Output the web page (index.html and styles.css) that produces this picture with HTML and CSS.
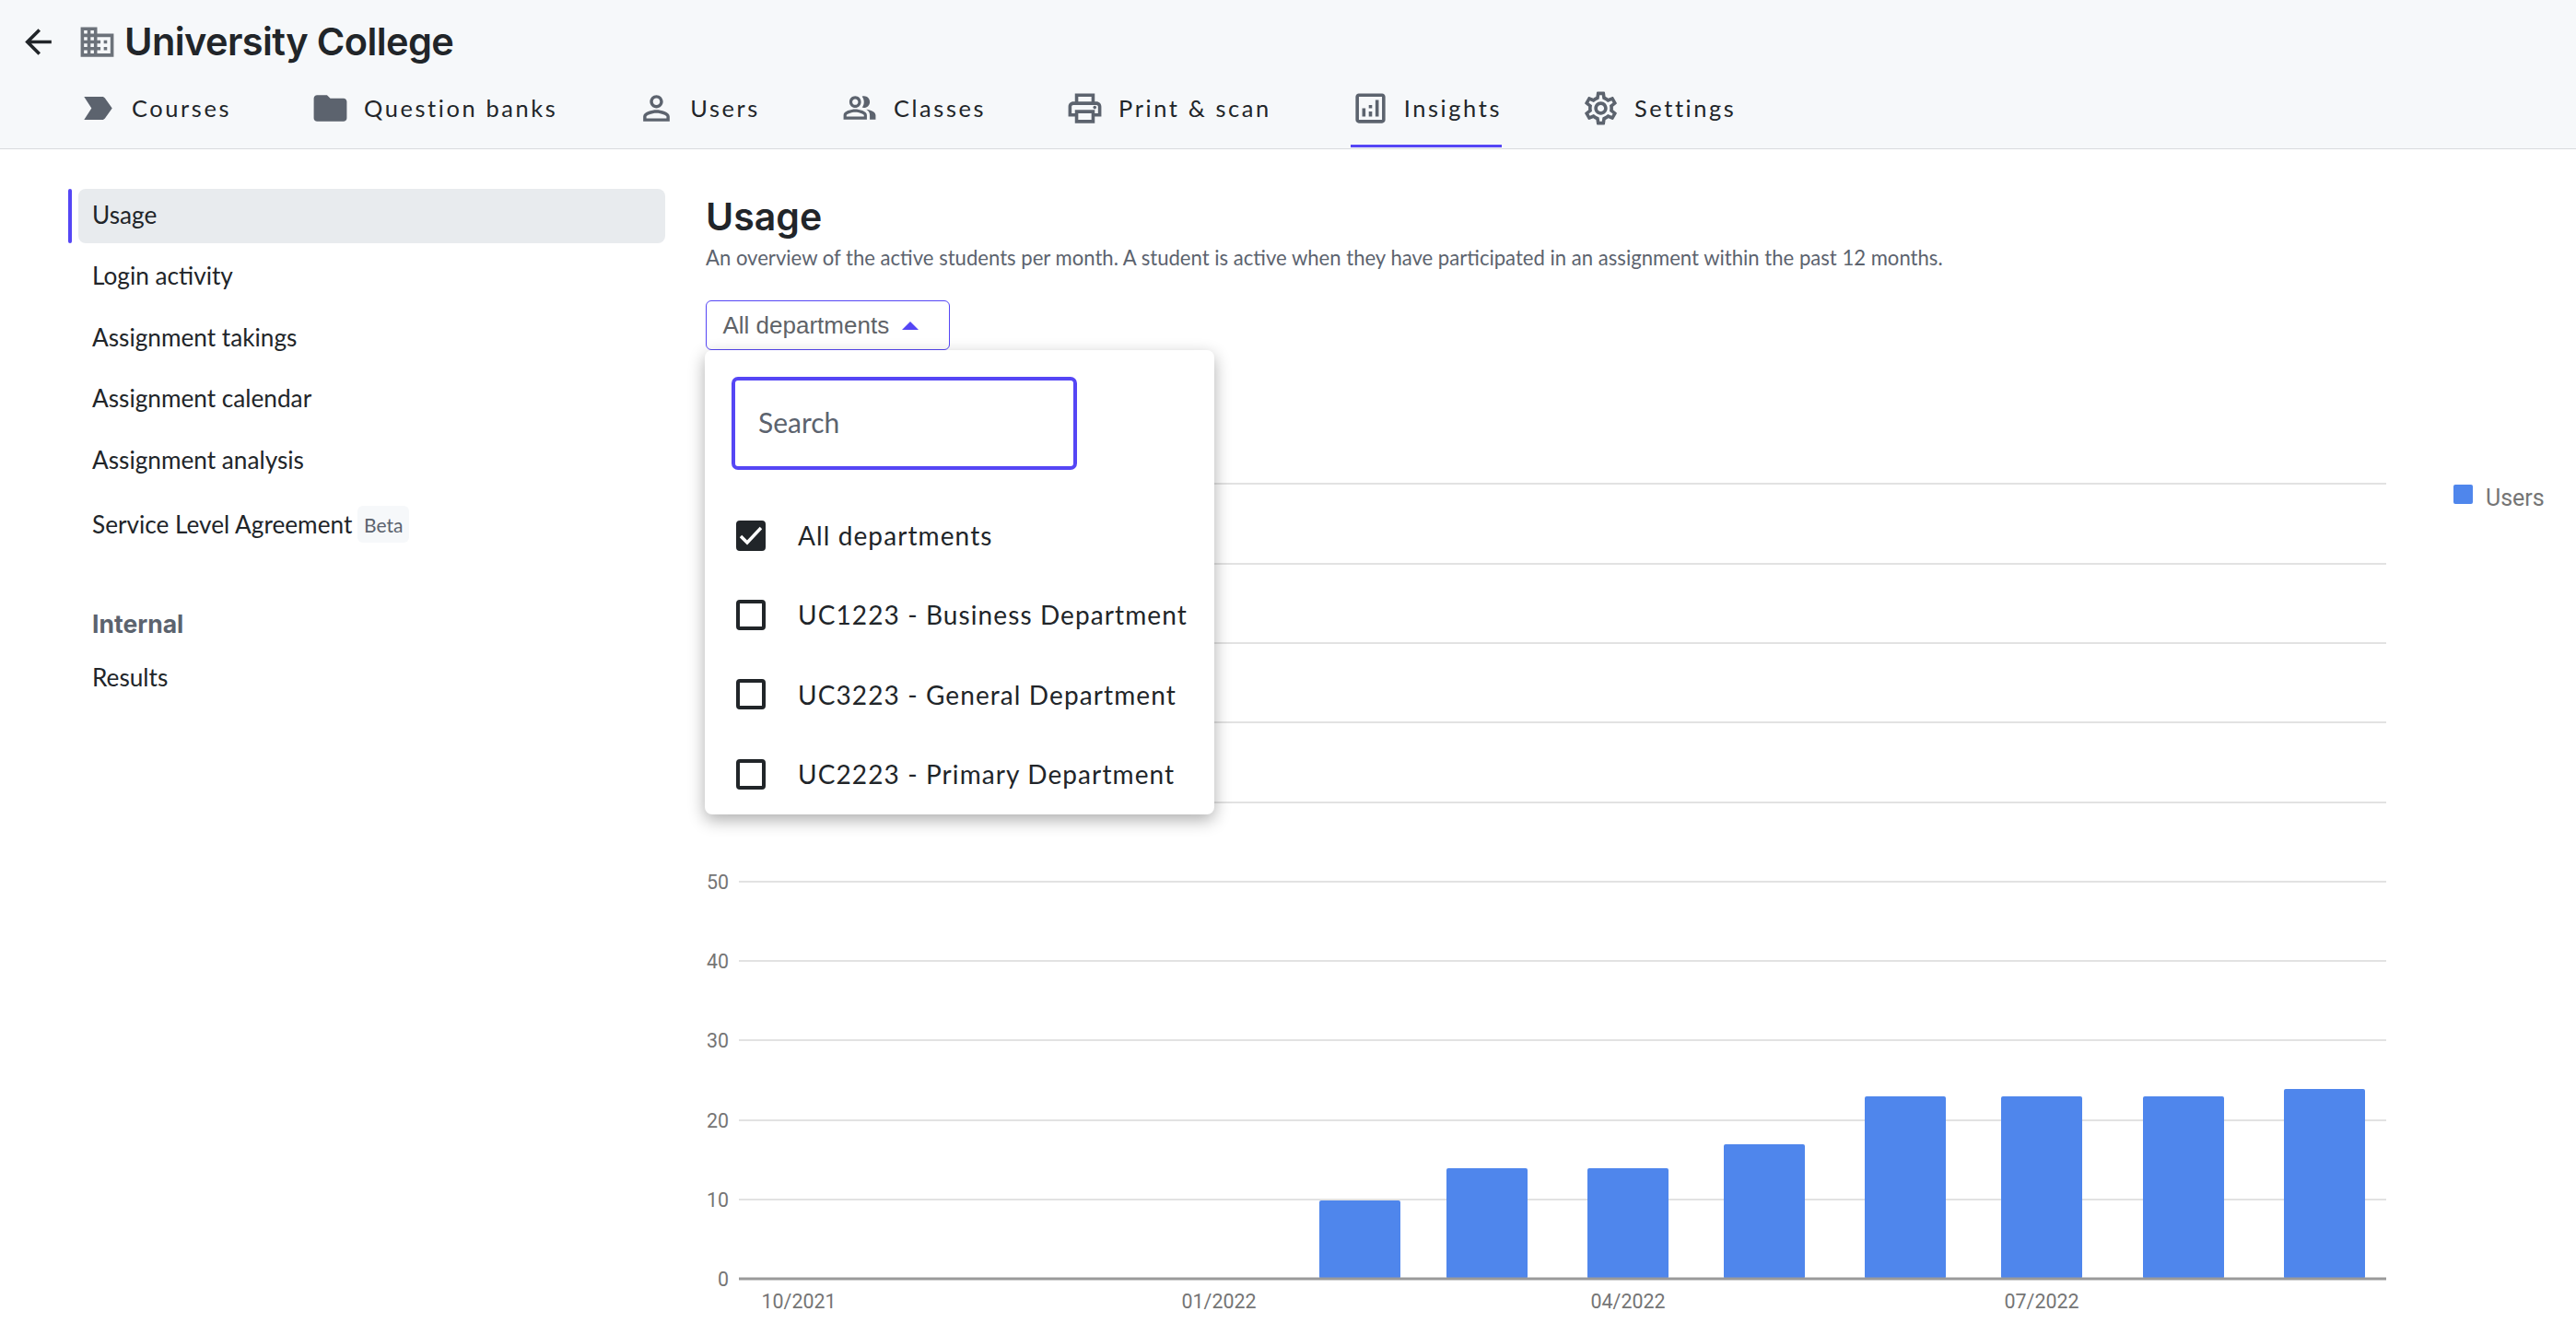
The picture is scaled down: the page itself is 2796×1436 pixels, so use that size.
FILE: index.html
```html
<!DOCTYPE html>
<html>
  <head>
    <meta charset="utf-8">
    <title>University College - Insights</title>
    <link rel="stylesheet" href="styles.css">
  </head>
  <body>
    <header class="top-bar">
      <div class="title-row">
        <svg class="icon icon-back" viewBox="0 0 24 24"><path d="M20 11H7.83l5.59-5.59L12 4l-8 8 8 8 1.41-1.41L7.83 13H20v-2z"/></svg>
        <svg class="icon icon-building" viewBox="0 0 24 24"><path d="M12 7V3H2v18h20V7H12zM6 19H4v-2h2v2zm0-4H4v-2h2v2zm0-4H4V9h2v2zm0-4H4V5h2v2zm4 12H8v-2h2v2zm0-4H8v-2h2v2zm0-4H8V9h2v2zm0-4H8V5h2v2zm10 12h-8v-2h2v-2h-2v-2h2v-2h-2V9h8v10zm-2-8h-2v2h2v-2zm0 4h-2v2h2v-2z"/></svg>
        <h1 class="org-name">University College</h1>
      </div>
      <nav class="tabs">
        <a class="tab">
          <svg class="icon" viewBox="0 0 24 24"><path d="M3.5 18.99l11 .01c.67 0 1.27-.33 1.63-.84L20.5 12l-4.37-6.16c-.36-.51-.96-.84-1.63-.84l-11 .01L8 12l-4.5 6.99z"/></svg>
          <span>Courses</span>
        </a>
        <a class="tab">
          <svg class="icon" viewBox="0 0 24 24"><path d="M10 4H4c-1.1 0-1.99.9-1.99 2L2 18c0 1.1.9 2 2 2h16c1.1 0 2-.9 2-2V8c0-1.1-.9-2-2-2h-8l-2-2z"/></svg>
          <span>Question banks</span>
        </a>
        <a class="tab">
          <svg class="icon" viewBox="0 0 24 24"><path d="M12 5.9c1.16 0 2.1.94 2.1 2.1s-.94 2.1-2.1 2.1S9.9 9.16 9.9 8s.94-2.1 2.1-2.1m0 9c2.97 0 6.1 1.46 6.1 2.1v1.1H5.9V17c0-.64 3.13-2.1 6.1-2.1M12 4C9.79 4 8 5.79 8 8s1.79 4 4 4 4-1.79 4-4-1.79-4-4-4zm0 9c-2.67 0-8 1.34-8 4v3h16v-3c0-2.66-5.33-4-8-4z"/></svg>
          <span>Users</span>
        </a>
        <a class="tab">
          <svg class="icon icon-classes" viewBox="0 0 24 24"><path d="M16.67 13.13C18.04 14.06 19 15.32 19 17v3h4v-3c0-2.18-3.57-3.47-6.33-3.87zM15 12c2.21 0 4-1.79 4-4s-1.79-4-4-4c-.47 0-.91.1-1.33.24C14.5 5.27 15 6.58 15 8s-.5 2.73-1.33 3.76c.42.14.86.24 1.33.24zM9 12c2.21 0 4-1.79 4-4s-1.79-4-4-4-4 1.79-4 4 1.79 4 4 4zm0-6c1.1 0 2 .9 2 2s-.9 2-2 2-2-.9-2-2 .9-2 2-2zM9 13c-2.67 0-8 1.34-8 4v3h16v-3c0-2.66-5.33-4-8-4zm6 5H3v-.99C3.2 16.29 6.3 15 9 15s5.8 1.29 6 2v1z"/></svg>
          <span>Classes</span>
        </a>
        <a class="tab">
          <svg class="icon" viewBox="0 0 24 24"><path d="M19 8h-1V3H6v5H5c-1.66 0-3 1.34-3 3v6h4v4h12v-4h4v-6c0-1.66-1.34-3-3-3zM8 5h8v3H8V5zm8 12v2H8v-4h8v2zm2-2v-2H6v2H4v-4c0-.55.45-1 1-1h14c.55 0 1 .45 1 1v4h-2z"/><circle cx="18" cy="11.5" r="1"/></svg>
          <span>Print &amp; scan</span>
        </a>
        <a class="tab active">
          <svg class="icon" viewBox="0 0 24 24"><path d="M19 3H5c-1.1 0-2 .9-2 2v14c0 1.1.9 2 2 2h14c1.1 0 2-.9 2-2V5c0-1.1-.9-2-2-2zm0 16H5V5h14v14zM7 12h2v5H7zm8-5h2v10h-2zm-4 7h2v3h-2zm0-4h2v2h-2z"/></svg>
          <span>Insights</span>
        </a>
        <a class="tab">
          <svg class="icon" viewBox="0 0 24 24"><path d="M19.43 12.98c.04-.32.07-.64.07-.98 0-.34-.03-.66-.07-.98l2.11-1.65c.19-.15.24-.42.12-.64l-2-3.46c-.09-.16-.26-.25-.44-.25-.06 0-.12.01-.17.03l-2.49 1c-.52-.4-1.08-.73-1.69-.98l-.38-2.65C14.46 2.18 14.25 2 14 2h-4c-.25 0-.46.18-.49.42l-.38 2.65c-.61.25-1.17.59-1.69.98l-2.49-1c-.06-.02-.12-.03-.18-.03-.17 0-.34.09-.43.25l-2 3.46c-.13.22-.07.49.12.64l2.11 1.65c-.04.32-.07.65-.07.98 0 .33.03.66.07.98l-2.11 1.65c-.19.15-.24.42-.12.64l2 3.46c.09.16.26.25.44.25.06 0 .12-.01.17-.03l2.49-1c.52.4 1.08.73 1.69.98l.38 2.65c.03.24.24.42.49.42h4c.25 0 .46-.18.49-.42l.38-2.65c.61-.25 1.17-.59 1.69-.98l2.49 1c.06.02.12.03.18.03.17 0 .34-.09.43-.25l2-3.46c.12-.22.07-.49-.12-.64l-2.11-1.65zm-1.98-1.71c.04.31.05.52.05.73 0 .21-.02.43-.05.73l-.14 1.13.89.7 1.08.84-.7 1.21-1.27-.51-1.04-.42-.9.68c-.43.32-.84.56-1.25.73l-1.06.43-.16 1.13-.2 1.35h-1.4l-.19-1.35-.16-1.13-1.06-.43c-.43-.18-.83-.41-1.23-.71l-.91-.7-1.06.43-1.27.51-.7-1.21 1.08-.84.89-.7-.14-1.13c-.03-.31-.05-.54-.05-.74s.02-.43.05-.73l.14-1.13-.89-.7-1.08-.84.7-1.21 1.27.51 1.04.42.9-.68c.43-.32.84-.56 1.25-.73l1.06-.43.16-1.13.2-1.35h1.39l.19 1.35.16 1.13 1.06.43c.43.18.83.41 1.23.71l.91.7 1.06-.43 1.27-.51.7 1.21-1.07.85-.89.7.14 1.13zM12 8c-2.21 0-4 1.79-4 4s1.79 4 4 4 4-1.79 4-4-1.79-4-4-4zm0 6c-1.1 0-2-.9-2-2s.9-2 2-2 2 .9 2 2-.9 2-2 2z"/></svg>
          <span>Settings</span>
        </a>
      </nav>
    </header>

    <div class="page">
      <aside class="sidebar">
        <a class="side-item active">Usage</a>
        <a class="side-item">Login activity</a>
        <a class="side-item">Assignment takings</a>
        <a class="side-item">Assignment calendar</a>
        <a class="side-item">Assignment analysis</a>
        <a class="side-item side-item-beta">Service Level Agreement <span class="badge">Beta</span></a>
        <div class="side-heading">Internal</div>
        <a class="side-item">Results</a>
      </aside>

      <main class="content">
        <h2 class="page-title">Usage</h2>
        <p class="page-intro">An overview of the active students per month. A student is active when they have participated in an assignment within the past 12 months.</p>

        <div class="dropdown">
          <button type="button" class="dropdown-toggle">All departments <span class="caret"></span></button>
          <div class="dropdown-menu">
            <input type="text" class="search-input" placeholder="Search">
            <label class="option">
              <span class="check checked"><svg viewBox="0 0 24 25"><path d="M1 13l7 7L23 4" /></svg></span>
              All departments
            </label>
            <label class="option"><span class="check"></span>UC1223 - Business Department</label>
            <label class="option"><span class="check"></span>UC3223 - General Department</label>
            <label class="option"><span class="check"></span>UC2223 - Primary Department</label>
          </div>
        </div>

        <svg class="chart" width="2030" height="936" viewBox="0 0 2030 936">
          <g class="grid">
            <line x1="36" x2="1824" y1="25" y2="25"/>
            <line x1="36" x2="1824" y1="112" y2="112"/>
            <line x1="36" x2="1824" y1="198" y2="198"/>
            <line x1="36" x2="1824" y1="284" y2="284"/>
            <line x1="36" x2="1824" y1="371" y2="371"/>
            <line x1="36" x2="1824" y1="457" y2="457"/>
            <line x1="36" x2="1824" y1="543" y2="543"/>
            <line x1="36" x2="1824" y1="629" y2="629"/>
            <line x1="36" x2="1824" y1="716" y2="716"/>
            <line x1="36" x2="1824" y1="802" y2="802"/>
          </g>
          <g class="bars">
            <rect x="666" y="803" width="88" height="85" rx="2"/>
            <rect x="804" y="768" width="88" height="120" rx="2"/>
            <rect x="957" y="768" width="88" height="120" rx="2"/>
            <rect x="1105" y="742" width="88" height="146" rx="2"/>
            <rect x="1258" y="690" width="88" height="198" rx="2"/>
            <rect x="1406" y="690" width="88" height="198" rx="2"/>
            <rect x="1560" y="690" width="88" height="198" rx="2"/>
            <rect x="1713" y="682" width="88" height="206" rx="2"/>
          </g>
          <line class="axis" x1="36" x2="1824" y1="888" y2="888"/>
          <g class="y-labels">
            <text x="25" y="465">50</text>
            <text x="25" y="551">40</text>
            <text x="25" y="637">30</text>
            <text x="25" y="724">20</text>
            <text x="25" y="810">10</text>
            <text x="25" y="896">0</text>
          </g>
          <g class="x-labels">
            <text x="101" y="920">10/2021</text>
            <text x="557" y="920">01/2022</text>
            <text x="1001" y="920">04/2022</text>
            <text x="1450" y="920">07/2022</text>
          </g>
          <rect class="legend-key" x="1897" y="26" width="21" height="21" rx="2"/>
          <text class="legend-label" x="1932" y="49">Users</text>
        </svg>
      </main>
    </div>
  </body>
</html>
```

FILE: styles.css
```css
:root {
  --color-text: #212529;
  --color-muted: #5c636e;
  --color-icon: #5c636e;
  --color-accent: #5546f5;
  --color-header: #f6f8fa;
  --color-border: #d8dade;
  --color-bar: #4f86ec;
  --color-chart-text: #757575;
  --font-body: "Lato", "Noto Sans", sans-serif;
  --font-head: "Inter", "Noto Sans", sans-serif;
}

html, body {
  height: 100%;
}

body {
  margin: 0;
  overflow: hidden;
  background: white;
  color: var(--color-text);
  font-family: var(--font-body);
}

.icon {
  width: 43px;
  height: 43px;
  flex: none;
  fill: var(--color-icon);
}

.top-bar {
  height: 161px;
  background: var(--color-header);
  border-bottom: 1px solid var(--color-border);
}

.title-row {
  display: flex;
  align-items: center;
  height: 90px;
  padding-left: 20px;
}

.icon-back {
  fill: var(--color-text);
}

.icon-building {
  margin-left: 21px;
  fill: #6c727a;
}

.org-name {
  margin: 0 0 0 8px;
  font-family: var(--font-head);
  font-size: 41.5px;
  font-weight: 600;
  letter-spacing: -0.6px;
}

.tabs {
  display: flex;
  gap: 86px;
  padding-left: 85px;
}

.tab {
  display: flex;
  align-items: center;
  gap: 15px;
  height: 54px;
  padding-bottom: 13px;
  border-bottom: 3px solid transparent;
  font-size: 25.4px;
  letter-spacing: 2.6px;
}

.tab.active {
  border-bottom-color: var(--color-accent);
}

.icon-classes {
  width: 38px;
  height: 38px;
  margin: 0 3px;
}

.page {
  display: flex;
  gap: 44px;
}

.sidebar {
  width: 637px;
  flex: none;
  margin-left: 85px;
  padding-top: 43px;
  font-size: 26.2px;
}

.side-item {
  position: relative;
  box-sizing: border-box;
  display: flex;
  align-items: center;
  gap: 6px;
  height: 59px;
  margin-bottom: 7.4px;
  padding: 0 0 3px 15px;
  border-radius: 8px;
}

.side-item.active {
  background: #e8ebee;
}

.side-item.active::before {
  content: "";
  position: absolute;
  left: -11px;
  top: 0;
  bottom: 0;
  width: 4px;
  border-radius: 2px;
  background: var(--color-accent);
}

.side-item-beta {
  margin-top: 11.5px;
}

.badge {
  display: flex;
  align-items: center;
  justify-content: center;
  width: 56px;
  height: 40px;
  border-radius: 6px;
  background: var(--color-header);
  color: var(--color-muted);
  font-size: 21px;
  letter-spacing: 0;
}

.side-heading {
  margin: 61px 0 13.5px 15px;
  color: var(--color-muted);
  font-family: var(--font-head);
  font-size: 26.5px;
  font-weight: 700;
}

.content {
  flex: 1;
  padding-top: 48.5px;
}

.page-title {
  margin: 0;
  font-family: var(--font-head);
  font-size: 41px;
  font-weight: 600;
  line-height: 48px;
}

.page-intro {
  margin: 6px 0 0;
  color: var(--color-muted);
  font-size: 22.1px;
  line-height: 30px;
}

.dropdown {
  position: relative;
  width: 265px;
  margin-top: 31.5px;
}

.dropdown-toggle {
  display: flex;
  align-items: center;
  gap: 14px;
  width: 265px;
  height: 54px;
  padding: 0 0 0 17.5px;
  border: 1.5px solid var(--color-accent);
  border-radius: 6px;
  background: white;
  color: #5f6368;
  font-family: "Liberation Sans", sans-serif;
  font-size: 26px;
}

.caret {
  width: 0;
  height: 0;
  border-left: 9px solid transparent;
  border-right: 9px solid transparent;
  border-bottom: 9px solid var(--color-accent);
}

.dropdown-menu {
  position: absolute;
  z-index: 10;
  top: 54px;
  left: -1px;
  box-sizing: border-box;
  width: 553px;
  height: 504px;
  padding: 29px 0 0 29px;
  border-radius: 8px;
  background: white;
  box-shadow: 0 6px 18px rgba(0, 0, 0, 0.32);
}

.search-input {
  display: block;
  box-sizing: border-box;
  width: 375px;
  height: 101px;
  margin-bottom: 28px;
  padding: 0 25px 3px;
  border: 4px solid var(--color-accent);
  border-radius: 7px;
  outline: none;
  font-family: var(--font-body);
  font-size: 30px;
}

.search-input::placeholder {
  color: var(--color-muted);
  opacity: 1;
}

.option {
  display: flex;
  align-items: center;
  gap: 35px;
  height: 86.3px;
  margin-left: 5px;
  font-size: 28px;
  letter-spacing: 1.1px;
  white-space: nowrap;
}

.check {
  box-sizing: border-box;
  width: 32px;
  height: 33px;
  flex: none;
  border: 4px solid var(--color-text);
  border-radius: 4px;
}

.check.checked {
  background: var(--color-text);
}

.check svg {
  display: block;
  width: 24px;
  height: 25px;
  fill: none;
  stroke: white;
  stroke-width: 3.5;
}

.chart {
  display: block;
  margin-top: 120px;
}

.grid line {
  stroke: #e2e2e2;
  stroke-width: 2;
}

.axis {
  stroke: #9a9a9a;
  stroke-width: 3;
}

.bars rect, .legend-key {
  fill: var(--color-bar);
}

.y-labels text, .x-labels text, .legend-label {
  fill: var(--color-chart-text);
  font-family: "Roboto", sans-serif;
}

.y-labels text {
  font-size: 21.4px;
  text-anchor: end;
}

.x-labels text {
  font-size: 21.4px;
  text-anchor: middle;
}

.legend-label {
  font-size: 25px;
}
```
